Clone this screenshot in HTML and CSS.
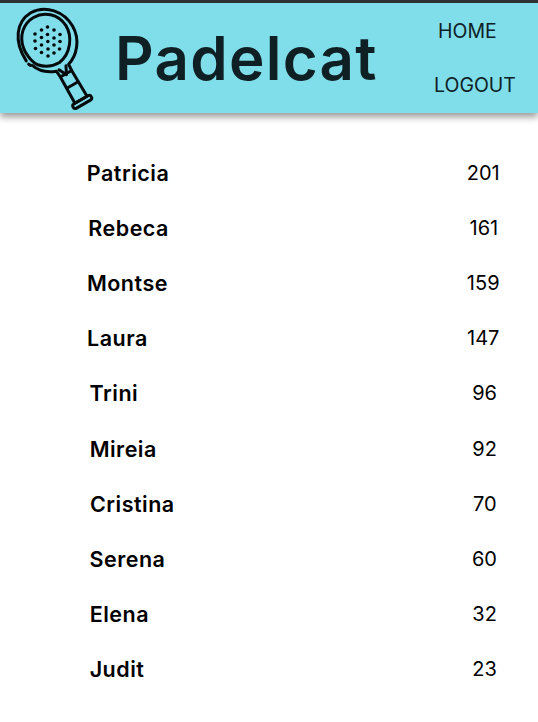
FILE: index.html
```html
<!DOCTYPE html>
<html lang="en">
<head>
    <meta charset="UTF-8">
    <meta name="viewport" content="width=device-width, initial-scale=1.0">
    <title>Padelcat</title>
    <link rel="stylesheet" href="styles.css">
</head>
<body>
    <header class="header">
        <svg class="logo" width="110" height="110" viewBox="0 0 110 110" fill="none" stroke="#050a0c" stroke-width="3" stroke-linecap="round" stroke-linejoin="round">
            <g transform="translate(46.5 37) rotate(-30)">
                <path d="M-28 8C-29 -16 -17 -31 0 -31.500C17 -31 29.500 -16 29.500 1C29.500 17 18 29 7 32L6.500 39"/>
                <path d="M-7 32L-6.500 39M-7 32C-15 29 -22 24 -25 15"/>
                <path d="M-27.500 12L-26.500 14"/>
                <path d="M-20 17C-25 10 -24.500 -2 -24 -4C-22 -17 -12 -26 0 -26C12 -26 23 -17 24 -3C24.500 10 14 24 0 26C-8 26 -15 23 -20 17Z"/>
                <path d="M-4 32L0 40L4 32"/>
                <path d="M-6.500 39H6.500L7 69H-7Z"/>
                <path d="M-6.500 52H6.500"/>
                <rect x="-10.500" y="69" width="21" height="5" rx="2.500"/>
            </g>
            <g fill="#050a0c" stroke="none">
                <circle cx="35" cy="31" r="1.800"/><circle cx="35" cy="38" r="1.800"/><circle cx="35.500" cy="45.500" r="1.800"/>
                <circle cx="41.500" cy="27" r="1.800"/><circle cx="41.500" cy="34.500" r="1.800"/><circle cx="41.500" cy="42" r="1.800"/><circle cx="41.500" cy="49.500" r="1.800"/>
                <circle cx="47.500" cy="24" r="1.800"/><circle cx="47.500" cy="31.500" r="1.800"/><circle cx="47.800" cy="38.500" r="1.800"/><circle cx="48" cy="46" r="1.800"/><circle cx="48" cy="53" r="1.800"/>
                <circle cx="54" cy="27" r="1.800"/><circle cx="54" cy="35" r="1.800"/><circle cx="54" cy="42" r="1.800"/><circle cx="54" cy="50" r="1.800"/>
                <circle cx="60" cy="31.500" r="1.800"/><circle cx="60" cy="38.500" r="1.800"/><circle cx="59.500" cy="46" r="1.800"/>
            </g>
        </svg>
        <h1 class="title">Padelcat</h1>
        <nav class="nav">
            <a class="nav-link nav-home" href="#">HOME</a>
            <a class="nav-link" href="#">LOGOUT</a>
        </nav>
    </header>

    <main class="ranking">
        <div class="row"><span class="name">Patricia</span><span class="points">201</span></div>
        <div class="row"><span class="name">Rebeca</span><span class="points">161</span></div>
        <div class="row"><span class="name">Montse</span><span class="points">159</span></div>
        <div class="row"><span class="name">Laura</span><span class="points">147</span></div>
        <div class="row"><span class="name">Trini</span><span class="points">96</span></div>
        <div class="row"><span class="name">Mireia</span><span class="points">92</span></div>
        <div class="row"><span class="name">Cristina</span><span class="points">70</span></div>
        <div class="row"><span class="name">Serena</span><span class="points">60</span></div>
        <div class="row"><span class="name">Elena</span><span class="points">32</span></div>
        <div class="row"><span class="name">Judit</span><span class="points">23</span></div>
    </main>
</body>
</html>
```

FILE: styles.css
```css
body {
    margin: 0;
    font-family: Inter, "Noto Sans", sans-serif;
    background-color: #fff;
    color: #000;
}

.header {
    display: flex;
    align-items: center;
    height: 110px;
    border-top: 3px solid #2f3233;
    background-color: #80deea;
    box-shadow: 0 4px 7px rgba(0, 0, 0, 0.4);
}

.logo {
    flex: none;
    width: 110px;
    height: 110px;
}

.title {
    flex: none;
    width: 319px;
    margin: 0 0 0 5px;
    font-size: 60px;
    font-weight: 600;
    letter-spacing: 1.3px;
    color: #0f2025;
}

.nav {
    display: flex;
    flex-direction: column;
    gap: 28px;
}

.nav-link {
    font-size: 19.500px;
    line-height: 26px;
    color: #0f2025;
    text-decoration: none;
}

.nav-home {
    margin-left: 4px;
}

.ranking {
    padding-top: 32px;
}

.row {
    display: flex;
    justify-content: space-evenly;
    align-items: center;
    height: 55.2px;
    margin-left: 50px;
    width: 486.500px;
}

.name {
    width: 343px;
    font-size: 21.500px;
    font-weight: 600;
    letter-spacing: 0.5px;
}

.points {
    font-size: 20px;
}
```
